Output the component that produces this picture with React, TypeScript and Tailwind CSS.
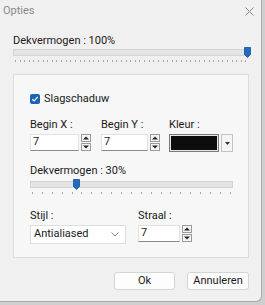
import React from "react";

const font = { fontFamily: 'Roboto, "Liberation Sans", sans-serif' };

function Spinner() {
  return (
    <div className="flex flex-col gap-[1px] ml-[2px]">
      <div className="w-[10px] h-[8px] border border-[#9a9a9a] bg-[#f4f4f4] flex items-center justify-center">
        <svg width="6" height="4" viewBox="0 0 6 4"><path d="M0 3.5 L3 0.5 L6 3.5 Z" fill="#222" /></svg>
      </div>
      <div className="w-[10px] h-[8px] border border-[#9a9a9a] bg-[#f4f4f4] flex items-center justify-center">
        <svg width="6" height="4" viewBox="0 0 6 4"><path d="M0 0.5 L3 3.5 L6 0.5 Z" fill="#222" /></svg>
      </div>
    </div>
  );
}

function NumInput({ w }: { w: string }) {
  return (
    <div className="flex items-center">
      <div className={`${w} h-[17px] bg-white border border-[#e2e2e2] border-b-[#8a8a8a] flex items-center pl-[2px] text-[11px] text-[#1a1a1a]`}>
        7
      </div>
      <Spinner />
    </div>
  );
}

function Slider({ count, pos, thumbLeft }: { count: number; pos: number; thumbLeft: number }) {
  const ticks = Array.from({ length: count });
  return (
    <div className="relative">
      <div className="h-[7px] bg-[#e4e4e4] border border-[#d4d4d4]" />
      <div className="absolute top-[-2px]" style={{ left: thumbLeft }}>
        <svg width="7" height="11" viewBox="0 0 7 11">
          <path d="M0.5 0.5 H6.5 V7.5 L3.5 10.5 L0.5 7.5 Z" fill="#1f6cc0" stroke="#15508f" strokeWidth="0.8" />
        </svg>
      </div>
      <div className="flex justify-between mt-[4px] px-[2px]">
        {ticks.map((_, i) => (
          <div key={i} className={`w-[1px] h-[2px] ${i === pos ? "bg-[#c9a46a]" : "bg-[#a8a8a8]"}`} />
        ))}
      </div>
    </div>
  );
}

const label = "text-[11px] leading-[14px] text-[#1a1a1a]";

export default function App() {
  return (
    <div className="w-[265px] h-[305px] bg-[#cfcfcf]" style={font}>
      <div className="w-[262px] h-[302px] bg-[#f1f0f1] border-r border-b border-[#a9a9a9] rounded-br-[6px] flex flex-col">
        <div className="h-[22px] flex items-center justify-between pl-[3px] pr-[7px]">
          <span className="text-[11px] text-[#8a8a8a]">Opties</span>
          <svg width="9" height="9" viewBox="0 0 9 9">
            <path d="M0.5 0.5 L8.5 8.5 M8.5 0.5 L0.5 8.5" stroke="#8a8a8a" strokeWidth="1" />
          </svg>
        </div>
        <div className="pl-[13px] pr-[12px] pt-[12px] flex flex-col">
          <div className={label}>Dekvermogen : 100%</div>
          <div className="mt-[1px]">
            <Slider count={51} pos={50} thumbLeft={231} />
          </div>
          <div className="mt-[12px] h-[184px] border border-[#dcdcdc] bg-[#f7f7f7] pl-[16px] pr-[15px] pt-[17px] flex flex-col">
            <div className="flex items-center gap-[4px]">
              <div className="w-[10px] h-[10px] rounded-[2px] bg-[#1c63b7] flex items-center justify-center">
                <svg width="8" height="8" viewBox="0 0 8 8">
                  <path d="M1.3 4.2 L3.2 6 L6.8 1.8" stroke="white" strokeWidth="1.2" fill="none" />
                </svg>
              </div>
              <span className={label}>Slagschaduw</span>
            </div>
            <div className="flex mt-[12px]">
              <div className="flex flex-col w-[71px]">
                <span className={label}>Begin X :</span>
                <div className="mt-[2px]"><NumInput w="w-[49px]" /></div>
              </div>
              <div className="flex flex-col w-[68px]">
                <span className={label}>Begin Y :</span>
                <div className="mt-[2px]"><NumInput w="w-[47px]" /></div>
              </div>
              <div className="flex flex-col">
                <span className={label}>Kleur :</span>
                <div className="mt-[2px] flex items-center">
                  <div className="w-[50px] h-[18px] border border-[#7a7a7a] bg-[#e8e8e8] p-[1px]">
                    <div className="w-full h-full bg-[#0d0d0d]" />
                  </div>
                  <div className="ml-[2px] w-[12px] h-[18px] border border-[#c4c4c4] bg-[#f5f5f5] flex items-center justify-center">
                    <svg width="5" height="3" viewBox="0 0 5 3"><path d="M0 0 L2.5 3 L5 0 Z" fill="#333" /></svg>
                  </div>
                </div>
              </div>
            </div>
            <div className={`${label} mt-[12px]`}>Dekvermogen : 30%</div>
            <div className="mt-[3px] w-[203px]">
              <Slider count={21} pos={6} thumbLeft={43} />
            </div>
            <div className="flex mt-[15px]">
              <div className="flex flex-col w-[108px]">
                <span className={label}>Stijl :</span>
                <div className="mt-[2px] w-[96px] h-[19px] bg-white border border-[#dedede] flex items-center justify-between pl-[3px] pr-[6px]">
                  <span className="text-[11px] text-[#1a1a1a]">Antialiased</span>
                  <svg width="8" height="5" viewBox="0 0 8 5"><path d="M0.5 0.5 L4 4 L7.5 0.5" stroke="#8a8a8a" fill="none" strokeWidth="1" /></svg>
                </div>
              </div>
              <div className="flex flex-col">
                <span className={label}>Straal :</span>
                <div className="mt-[2px]"><NumInput w="w-[42px]" /></div>
              </div>
            </div>
          </div>
          <div className="flex justify-end gap-[12px] mt-[14px]">
            <button className="w-[61px] h-[18px] bg-[#fdfdfd] border border-[#d4d4d4] rounded-[3px] text-[11px] leading-[14px] text-[#1a1a1a]">Ok</button>
            <button className="w-[62px] h-[18px] bg-[#fdfdfd] border border-[#d4d4d4] rounded-[3px] text-[11px] leading-[14px] text-[#1a1a1a]">Annuleren</button>
          </div>
        </div>
      </div>
    </div>
  );
}
